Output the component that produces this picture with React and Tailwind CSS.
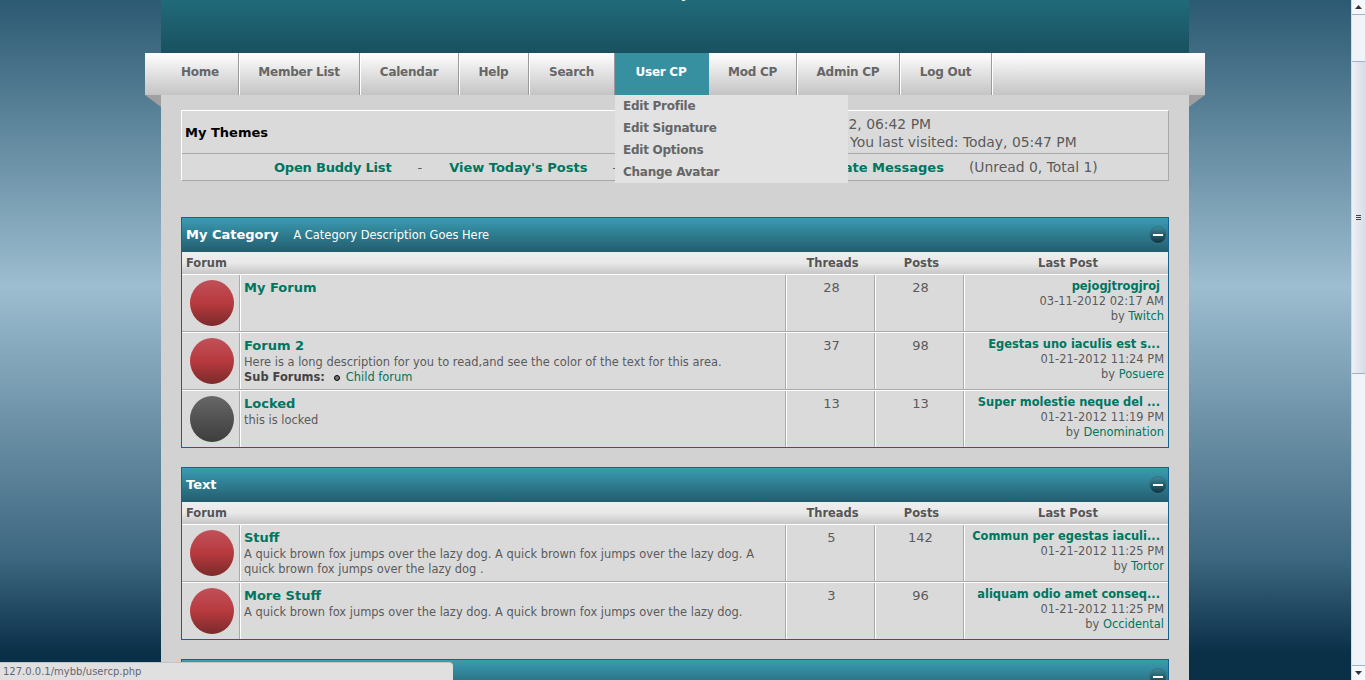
const font = "font-['DejaVu_Sans',Verdana,sans-serif]";

function Ball({ locked }) {
  return (
    <div
      className={
        "w-[44px] h-[46px] rounded-[50%] " +
        (locked
          ? "bg-gradient-to-b from-[#676767] to-[#3e3e3e]"
          : "bg-gradient-to-b from-[#c05058] via-[#b83a3f] to-[#7b2a2b]")
      }
    />
  );
}

function Row({ locked, title, desc, sub, threads, posts, last, date, by }) {
  return (
    <div className="flex h-[58px] last:h-[57px] bg-[#dadada] border-t border-t-white border-b border-b-[#aaaaaa] last:border-b-0">
      <div className="w-[58px] shrink-0 flex justify-center items-start pt-[5px] pl-[2px] border-r border-r-[#aaaaaa]">
        <Ball locked={locked} />
      </div>
      <div className="w-[546px] shrink-0 border-l border-l-white border-r border-r-[#aaaaaa] pl-[3px] pt-[5px]">
        <div className="text-[13px] leading-[16px] font-bold text-[#007560]">{title}</div>
        {desc && <div className="text-[11.45px] leading-[15px] text-[#5a5a5a] pt-[1px] pr-[16px]">{desc}</div>}
        {sub && (
          <div className="text-[11.45px] leading-[15px] text-[#5a5a5a] flex items-center">
            <b className="text-[#444444]">Sub Forums:</b>
            <span className="w-[6px] h-[6px] rounded-full bg-[#777777] border border-black ml-[9px] mr-[6px]" />
            <span className="text-[#007560]">Child forum</span>
          </div>
        )}
      </div>
      <div className="w-[89px] shrink-0 border-l border-l-white border-r border-r-[#aaaaaa] text-center text-[13px] leading-[16px] pt-[5px] text-[#5a5a5a] pl-[2px]">{threads}</div>
      <div className="w-[89px] shrink-0 border-l border-l-white border-r border-r-[#aaaaaa] text-center text-[13px] leading-[16px] pt-[5px] text-[#5a5a5a] pl-[2px]">{posts}</div>
      <div className="flex-1 border-l border-l-white text-right pt-[4px] pr-[4px] text-[11.45px] leading-[15px] text-[#5a5a5a]">
        <div className="font-bold text-[#007560] pr-[4px]">{last}</div>
        <div>{date}</div>
        <div>by <span className="text-[#007560]">{by}</span></div>
      </div>
    </div>
  );
}

function Minus() {
  return (
    <div className="w-[18px] h-[18px] rounded-full border border-[#2f7485] bg-gradient-to-b from-[#3f8797] to-[#0f3543] flex items-center justify-center">
      <div className="w-[10px] h-[2px] bg-white" />
    </div>
  );
}

function Category({ title, desc, rows }) {
  return (
    <div className="border-x border-x-[#15648f] border-b border-b-[#15648f] mb-[19px]">
      <div className="h-[35px] border-t border-t-[#15648f] bg-gradient-to-b from-[#3a9cb2] to-[#235d6e] flex items-center pl-[4px] pr-[1px] text-white">
        <span className="text-[13px] font-bold">{title}</span>
        {desc && <span className="text-[11.45px] ml-[15px] pt-[1px]">{desc}</span>}
        <span className="ml-auto"><Minus /></span>
      </div>
      {rows && (
        <>
          <div className="flex h-[22px] items-center pt-[2px] bg-gradient-to-b from-[#eeeeee] via-[#e8e8e8] to-[#c6c6c6] text-[11.45px] font-bold text-[#555555]">
            <div className="w-[604px] pl-[4px]">Forum</div>
            <div className="w-[89px] text-center pl-[4px]">Threads</div>
            <div className="w-[89px] text-center pl-[4px]">Posts</div>
            <div className="flex-1 text-center pl-[4px]">Last Post</div>
          </div>
          {rows.map((r) => <Row key={r.title} {...r} />)}
        </>
      )}
    </div>
  );
}

const nav = [
  ["Home", "w-[94px] pl-[36px]"],
  ["Member List", "w-[121px] justify-center"],
  ["Calendar", "w-[99px] justify-center"],
  ["Help", "w-[70px] justify-center"],
  ["Search", "w-[86px] justify-center"],
];
const nav2 = [
  ["Mod CP", "w-[88px] justify-center"],
  ["Admin CP", "w-[103px] justify-center"],
  ["Log Out", "w-[92px] justify-center"],
];

function NavItem({ label, cls }) {
  return (
    <div className={"h-full flex items-center pb-[4px] border-r border-r-[#9a9a9a] shadow-[1px_0_0_#ffffff] " + cls}>{label}</div>
  );
}

const cat1 = [
  { title: "My Forum", threads: 28, posts: 28, last: "pejogjtrogjroj", date: "03-11-2012 02:17 AM", by: "Twitch" },
  { title: "Forum 2", desc: "Here is a long description for you to read,and see the color of the text for this area.", sub: true, threads: 37, posts: 98, last: "Egestas uno iaculis est s...", date: "01-21-2012 11:24 PM", by: "Posuere" },
  { title: "Locked", locked: true, desc: "this is locked", threads: 13, posts: 13, last: "Super molestie neque del ...", date: "01-21-2012 11:19 PM", by: "Denomination" },
];
const cat2 = [
  { title: "Stuff", desc: "A quick brown fox jumps over the lazy dog. A quick brown fox jumps over the lazy dog. A quick brown fox jumps over the lazy dog .", threads: 5, posts: 142, last: "Commun per egestas iaculi...", date: "01-21-2012 11:25 PM", by: "Tortor" },
  { title: "More Stuff", desc: "A quick brown fox jumps over the lazy dog. A quick brown fox jumps over the lazy dog.", threads: 3, posts: 96, last: "aliquam odio amet conseq...", date: "01-21-2012 11:25 PM", by: "Occidental" },
];

export default function App() {
  return (
    <div className={"relative flex w-[1366px] h-[680px] overflow-hidden " + font}>
      <div className="w-[1351px] h-full overflow-hidden bg-[linear-gradient(to_bottom,#2c5a72_0%,#9dbdd0_42%,#6d92a8_62%,#3d6780_82%,#0a3048_96%)] px-[161px]">
        <div className="w-[1028px] bg-[#d2d2d2] h-full">
          <div className="h-[53px] bg-gradient-to-b from-[#206b7a] to-[#19505f] overflow-hidden text-center">
            <div className="text-white text-[13px] leading-[16px] font-bold -mt-[14px] pl-[20px]">y</div>
          </div>
          <div className="relative -mx-[16px] h-[42px] bg-gradient-to-b from-white to-[#c4c4c4] flex text-[12px] tracking-[-0.25px] font-bold text-[#666666]">
            {nav.map(([l, c]) => <NavItem key={l} label={l} cls={c} />)}
            <div className="relative w-[94px] h-full bg-[#37909f] text-white flex items-center justify-center pb-[4px] pr-[2px]">
              User CP
              <div className="absolute left-0 top-[42px] w-[233px] h-[88px] bg-[#e2e2e2] pl-[8px] z-10 text-[12px] leading-[22px] text-[#666666]">
                <div>Edit Profile</div>
                <div>Edit Signature</div>
                <div>Edit Options</div>
                <div>Change Avatar</div>
              </div>
            </div>
            {nav2.map(([l, c]) => <NavItem key={l} label={l} cls={c} />)}
            <div className="absolute left-0 top-[42px] w-0 h-0 border-t-[12px] border-t-[#a0a0a0] border-l-[16px] border-l-transparent" />
            <div className="absolute right-0 top-[42px] w-0 h-0 border-t-[12px] border-t-[#a0a0a0] border-r-[16px] border-r-transparent" />
          </div>
          <div className="px-[20px] pt-[15px]">
            <div className="h-[71px] border-t border-l border-t-white border-l-white border-r border-b border-r-[#a8a8a8] border-b-[#a8a8a8] bg-[#dadada] mb-[36px]">
              <div className="h-[43px] border-b border-b-[#a8a8a8] flex items-center pl-[3px] relative">
                <b className="text-[13px] text-black pt-[1px]">My Themes</b>
                <div className="ml-auto w-[468px] text-[13.9px] leading-[18px] text-[#5a5a5a] pt-[1px]">
                  <div className="w-[231px] text-right">03-11-2012, 06:42 PM</div>
                  <div className="pl-[150px]">You last visited: Today, 05:47 PM</div>
                </div>
              </div>
              <div className="h-[26px] flex items-center pt-[1px] text-[13px] text-[#5a5a5a] pl-[92px]">
                <b className="text-[#007560] tracking-[-0.2px]">Open Buddy List</b>
                <span className="ml-[26px]">-</span>
                <b className="text-[#007560] ml-[27px]">View Today's Posts</b>
                <span className="ml-[25px]">-</span>
                <b className="text-[#007560] ml-[26px]">View New Posts</b>
                <span className="ml-[25px]">-</span>
                <b className="text-[#007560] ml-[26px]">Private Messages</b>
                <span className="ml-[25px] text-[13.9px]">(Unread 0, Total 1)</span>
              </div>
            </div>
            <Category title="My Category" desc="A Category Description Goes Here" rows={cat1} />
            <Category title="Text" rows={cat2} />
            <Category title="" rows={[]} />
          </div>
        </div>
      </div>
      <div className="w-[15px] h-full bg-[#f0f3f8] border-x border-x-[#d5dbe3] flex flex-col relative">
        <div className="h-[15px] bg-[#f6f8fb] border-b border-b-[#9fb2c6] flex items-center justify-center">
          <svg width="7" height="4" viewBox="0 0 7 4"><path d="M0 4 L3.5 0 L7 4 Z" fill="#333" /></svg>
        </div>
        <div className="h-[46px]" />
        <div className="h-[313px] border-y border-y-[#9fb2c6] bg-gradient-to-r from-[#eef1f6] via-[#e3e6ee] to-[#d8dde6] flex flex-col items-center justify-center gap-[1px]">
          <div className="w-[5px] h-[1px] bg-[#444]" />
          <div className="w-[5px] h-[1px] bg-[#444]" />
          <div className="w-[5px] h-[1px] bg-[#444]" />
        </div>
        <div className="flex-1" />
        <div className="h-[15px] bg-[#f6f8fb] border-t border-t-[#9fb2c6] flex items-center justify-center">
          <svg width="7" height="4" viewBox="0 0 7 4"><path d="M0 0 L3.5 4 L7 0 Z" fill="#333" /></svg>
        </div>
      </div>
      <div className="absolute left-0 bottom-0 w-[453px] h-[18px] bg-[#e0e0e0] rounded-tr-[4px] border-t border-t-[#c4c4c4] pl-[3px] text-[10px] leading-[17px] text-[#666672] z-20">
        127.0.0.1/mybb/usercp.php
      </div>
    </div>
  );
}
